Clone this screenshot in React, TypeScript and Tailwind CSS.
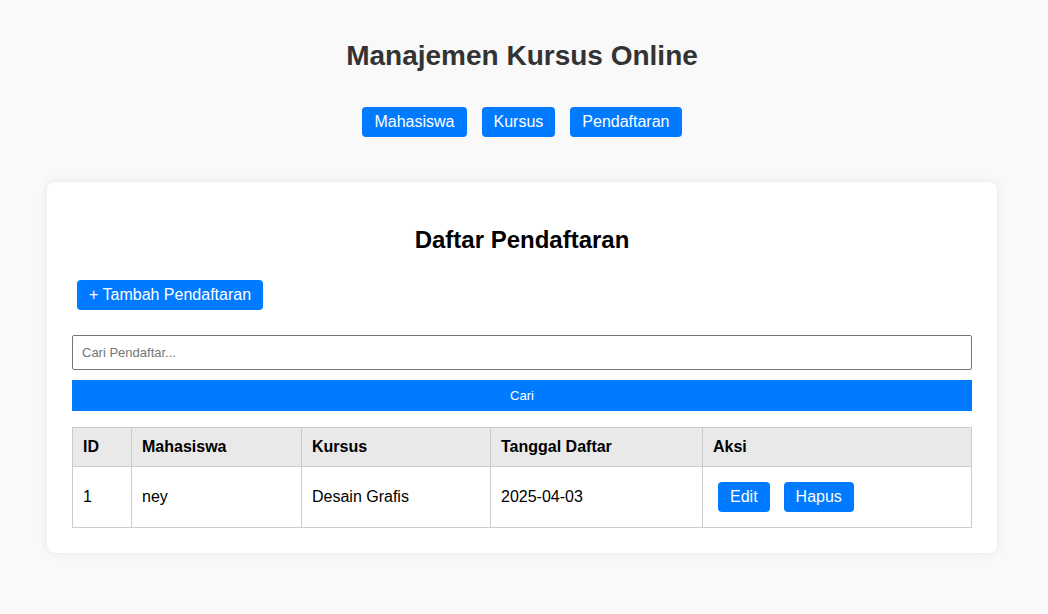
import { useState } from 'react';

interface Enrollment {
  id: number;
  student: string;
  course: string;
  date: string;
}

const ROWS: Enrollment[] = [
  { id: 1, student: 'ney', course: 'Desain Grafis', date: '2025-04-03' },
];

const NAV = ['Mahasiswa', 'Kursus', 'Pendaftaran'];

export default function App() {
  const [query, setQuery] = useState('');

  return (
    <div className="min-h-[614px] bg-[#f9f9f9] font-['Liberation_Sans',Arial,sans-serif] text-[#333]">
      <div className="w-[1044px] pt-[39px]">
        <h1 className="text-center text-[28px] font-bold leading-[34px]">Manajemen Kursus Online</h1>

        {/* Top nav */}
        <nav className="mt-[34px] flex justify-center gap-[15px]">
          {NAV.map((item) => (
            <button
              key={item}
              type="button"
              className="h-[30px] rounded-[4px] bg-[#007bff] px-3 text-[16px] text-white"
            >
              {item}
            </button>
          ))}
        </nav>

        {/* Card */}
        <div className="mx-auto mt-[45px] w-[950px] rounded-[8px] bg-white px-[25px] pt-[44px] pb-[25px] shadow-[0_0_10px_rgba(0,0,0,0.08)]">
          <h2 className="text-center text-[24px] font-bold leading-7 text-black">Daftar Pendaftaran</h2>

          <button
            type="button"
            className="mt-[26px] ml-[5px] h-[30px] rounded-[4px] bg-[#007bff] px-3 text-[16px] text-white"
          >
            + Tambah Pendaftaran
          </button>

          <input
            value={query}
            onChange={(e) => setQuery(e.target.value)}
            placeholder="Cari Pendaftar..."
            className="mt-[25px] block h-[35px] w-full rounded-[2px] border border-[#767676] px-[9px] text-[13px] text-black placeholder:text-[#757575]"
          />
          <button
            type="button"
            className="mt-[10px] block h-[31px] w-full bg-[#007bff] text-[13px] text-white"
          >
            Cari
          </button>

          <table className="mt-4 w-full border-collapse text-[16px] text-black">
            <thead>
              <tr className="bg-[#e9e9e9]">
                <th className="h-[39px] w-[59px] border border-[#ccc] px-[10px] text-left font-bold">ID</th>
                <th className="w-[170px] border border-[#ccc] px-[10px] text-left font-bold">Mahasiswa</th>
                <th className="w-[189px] border border-[#ccc] px-[10px] text-left font-bold">Kursus</th>
                <th className="w-[212px] border border-[#ccc] px-[10px] text-left font-bold">Tanggal Daftar</th>
                <th className="border border-[#ccc] px-[10px] text-left font-bold">Aksi</th>
              </tr>
            </thead>
            <tbody>
              {ROWS.map((r) => (
                <tr key={r.id}>
                  <td className="h-[61px] border border-[#ccc] px-[10px]">{r.id}</td>
                  <td className="border border-[#ccc] px-[10px]">{r.student}</td>
                  <td className="border border-[#ccc] px-[10px]">{r.course}</td>
                  <td className="border border-[#ccc] px-[10px]">{r.date}</td>
                  <td className="border border-[#ccc] px-[10px]">
                    <div className="flex gap-[14px] pl-[5px]">
                      <button type="button" className="h-[30px] rounded-[4px] bg-[#007bff] px-3 text-[16px] text-white">
                        Edit
                      </button>
                      <button type="button" className="h-[30px] rounded-[4px] bg-[#007bff] px-3 text-[16px] text-white">
                        Hapus
                      </button>
                    </div>
                  </td>
                </tr>
              ))}
            </tbody>
          </table>
        </div>
      </div>
    </div>
  );
}
